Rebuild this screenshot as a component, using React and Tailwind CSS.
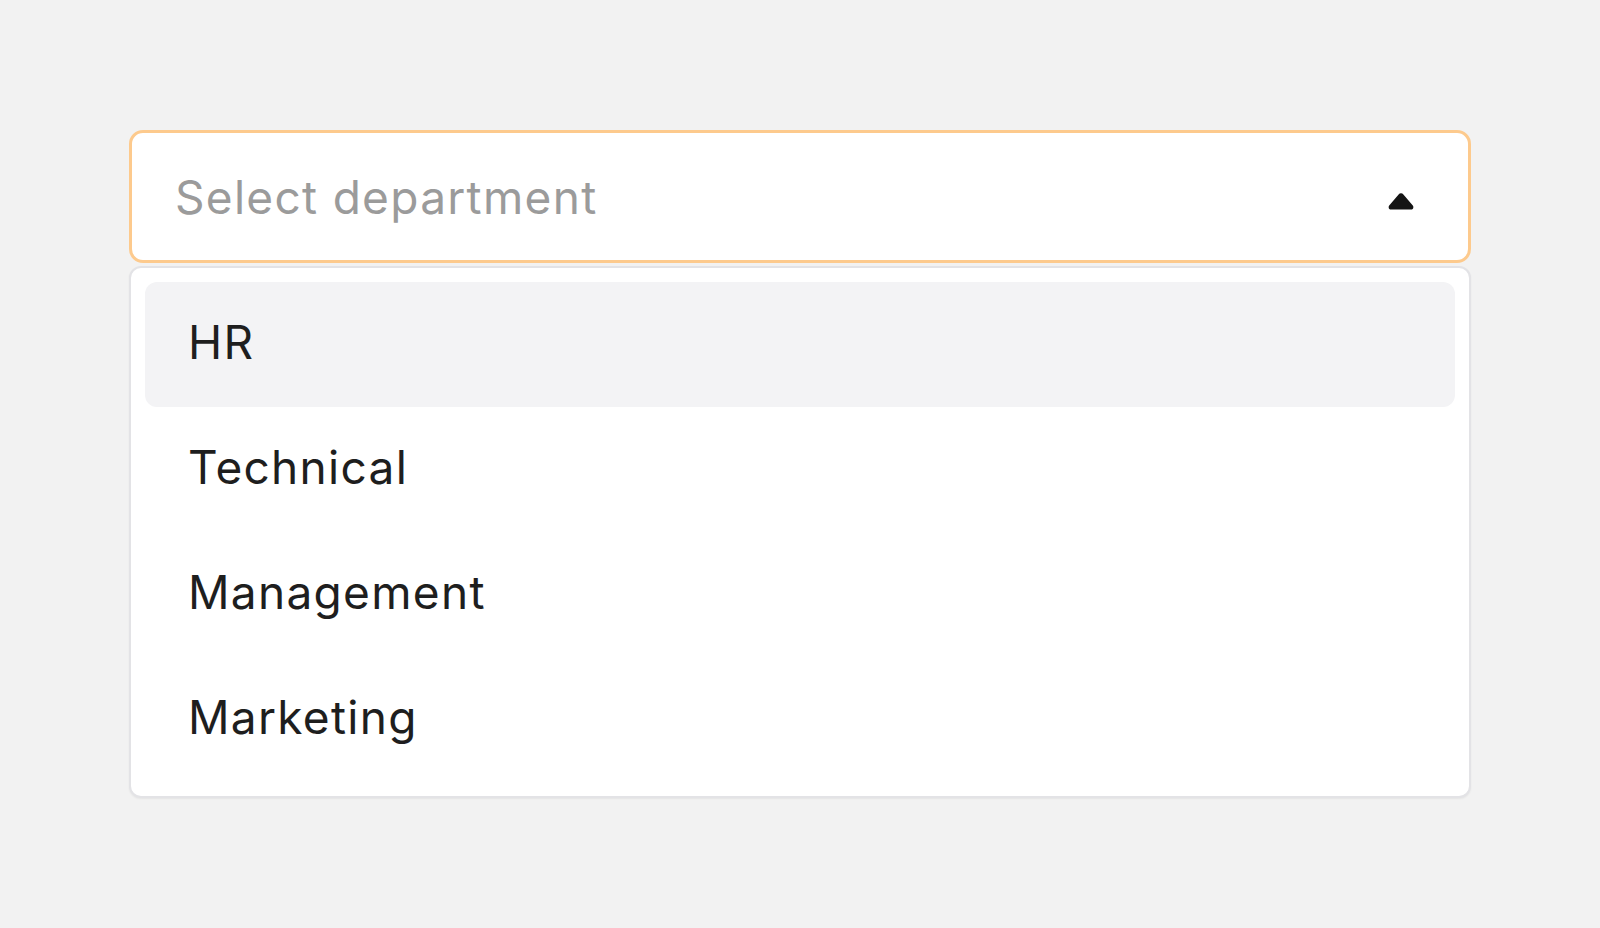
import { useState } from "react";

const departments = ["HR", "Technical", "Management", "Marketing"];

function CaretUp() {
  return (
    <svg width="28" height="18" viewBox="0 0 28 18" className="mt-2">
      <path
        d="M11.6 2.4a3 3 0 0 1 4.8 0l9.4 11.2c1.3 1.6.2 3.9-1.9 3.9H4.1c-2.1 0-3.2-2.3-1.9-3.9z"
        fill="#141414"
      />
    </svg>
  );
}

export default function App() {
  const [open] = useState(true);
  const [hovered, setHovered] = useState("HR");

  return (
    <div
      className="min-h-screen w-full bg-[#f2f2f2] px-[129px] pt-[130px]"
      style={{ fontFamily: "Inter, 'Noto Sans', sans-serif" }}
    >
      {/* Trigger */}
      <button className="flex h-[133px] w-full items-center justify-between rounded-[14px] border-[3px] border-[#fdca8d] bg-white pl-[43px] pr-[53px] text-left">
        <span className="text-[46px] leading-none text-[#9b9b9b] tracking-[1.3px]">
          Select department
        </span>
        <CaretUp />
      </button>

      {/* Menu */}
      {open && (
        <ul className="mt-[3px] rounded-[12px] border-2 border-[#e3e3e6] bg-white p-[14px] shadow-[0_1px_2px_rgba(0,0,0,0.06)]">
          {departments.map((d) => (
            <li
              key={d}
              onMouseEnter={() => setHovered(d)}
              className={`flex h-[125px] items-center rounded-[12px] pb-[5px] pl-[43px] text-[46px] leading-none tracking-[1.3px] text-[#1e1e1e] ${
                hovered === d ? "bg-[#f3f3f5]" : ""
              }`}
            >
              {d}
            </li>
          ))}
        </ul>
      )}
    </div>
  );
}
